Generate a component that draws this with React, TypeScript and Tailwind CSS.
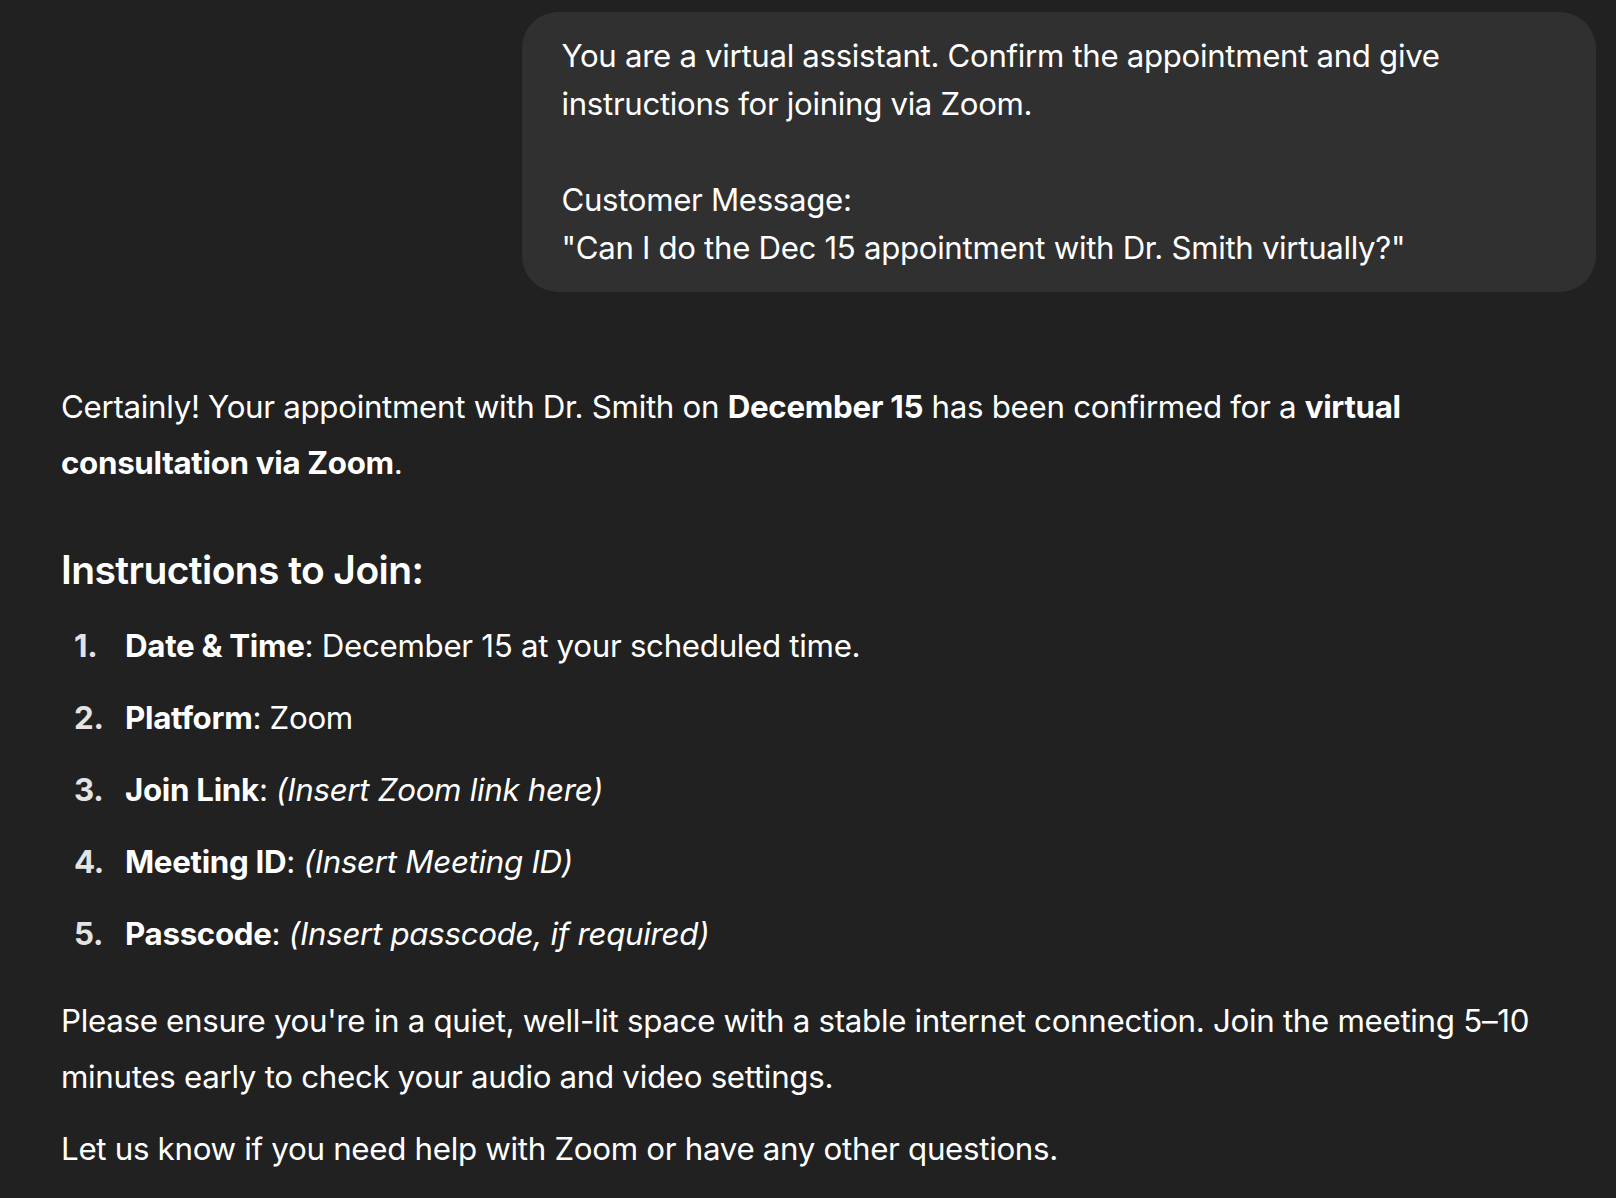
import React from "react";

export default function App() {
  const font = { fontFamily: 'Inter, "Noto Sans", sans-serif' };
  return (
    <div className="min-h-[1198px] w-full bg-[#212121] text-[#ececec]" style={font}>
      <div className="pl-[61px] pr-[20px] pt-[12px]">
        <div className="flex justify-end">
          <div className="max-w-[70%] rounded-[36px] bg-[#303030] px-[40px] py-[20px] text-[31.2px] leading-[48px] tracking-[-0.01em] text-white whitespace-pre-wrap">
            {"You are a virtual assistant. Confirm the appointment and give instructions for joining via Zoom.\n\nCustomer Message:\n\"Can I do the Dec 15 appointment with Dr. Smith virtually?\""}
          </div>
        </div>

        <div className="mt-[87px] text-[31.3px] leading-[56px] tracking-[-0.01em] text-white">
          <p>
            Certainly! Your appointment with Dr. Smith on <span className="font-bold">December 15</span> has been confirmed for a{" "}
            <span className="font-bold">
              virtual
              <br />
              consultation via Zoom
            </span>
            .
          </p>

          <h3 className="mt-[47px] text-[39px] leading-[64px] font-semibold tracking-[-0.015em]">Instructions to Join:</h3>

          <ol className="mt-[16px] flex flex-col gap-[16px]">
            {[
              ["1.", "Date & Time", <>December 15 at your scheduled time.</>],
              ["2.", "Platform", <>Zoom</>],
              ["3.", "Join Link", <em>(Insert Zoom link here)</em>],
              ["4.", "Meeting ID", <em>(Insert Meeting ID)</em>],
              ["5.", "Passcode", <em>(Insert passcode, if required)</em>],
            ].map(([n, label, rest], i) => (
              <li key={i} className="flex">
                <span className="w-[64px] shrink-0 pl-[13px] font-bold text-[#e3e3e3]">{n}</span>
                <span>
                  <span className="font-bold">{label}</span>: {rest}
                </span>
              </li>
            ))}
          </ol>

          <p className="mt-[31px]">
            Please ensure you're in a quiet, well-lit space with a stable internet connection. Join the meeting 5–10 minutes early to check your audio and video settings.
          </p>
          <p className="mt-[16px]">Let us know if you need help with Zoom or have any other questions.</p>
        </div>
      </div>
    </div>
  );
}
